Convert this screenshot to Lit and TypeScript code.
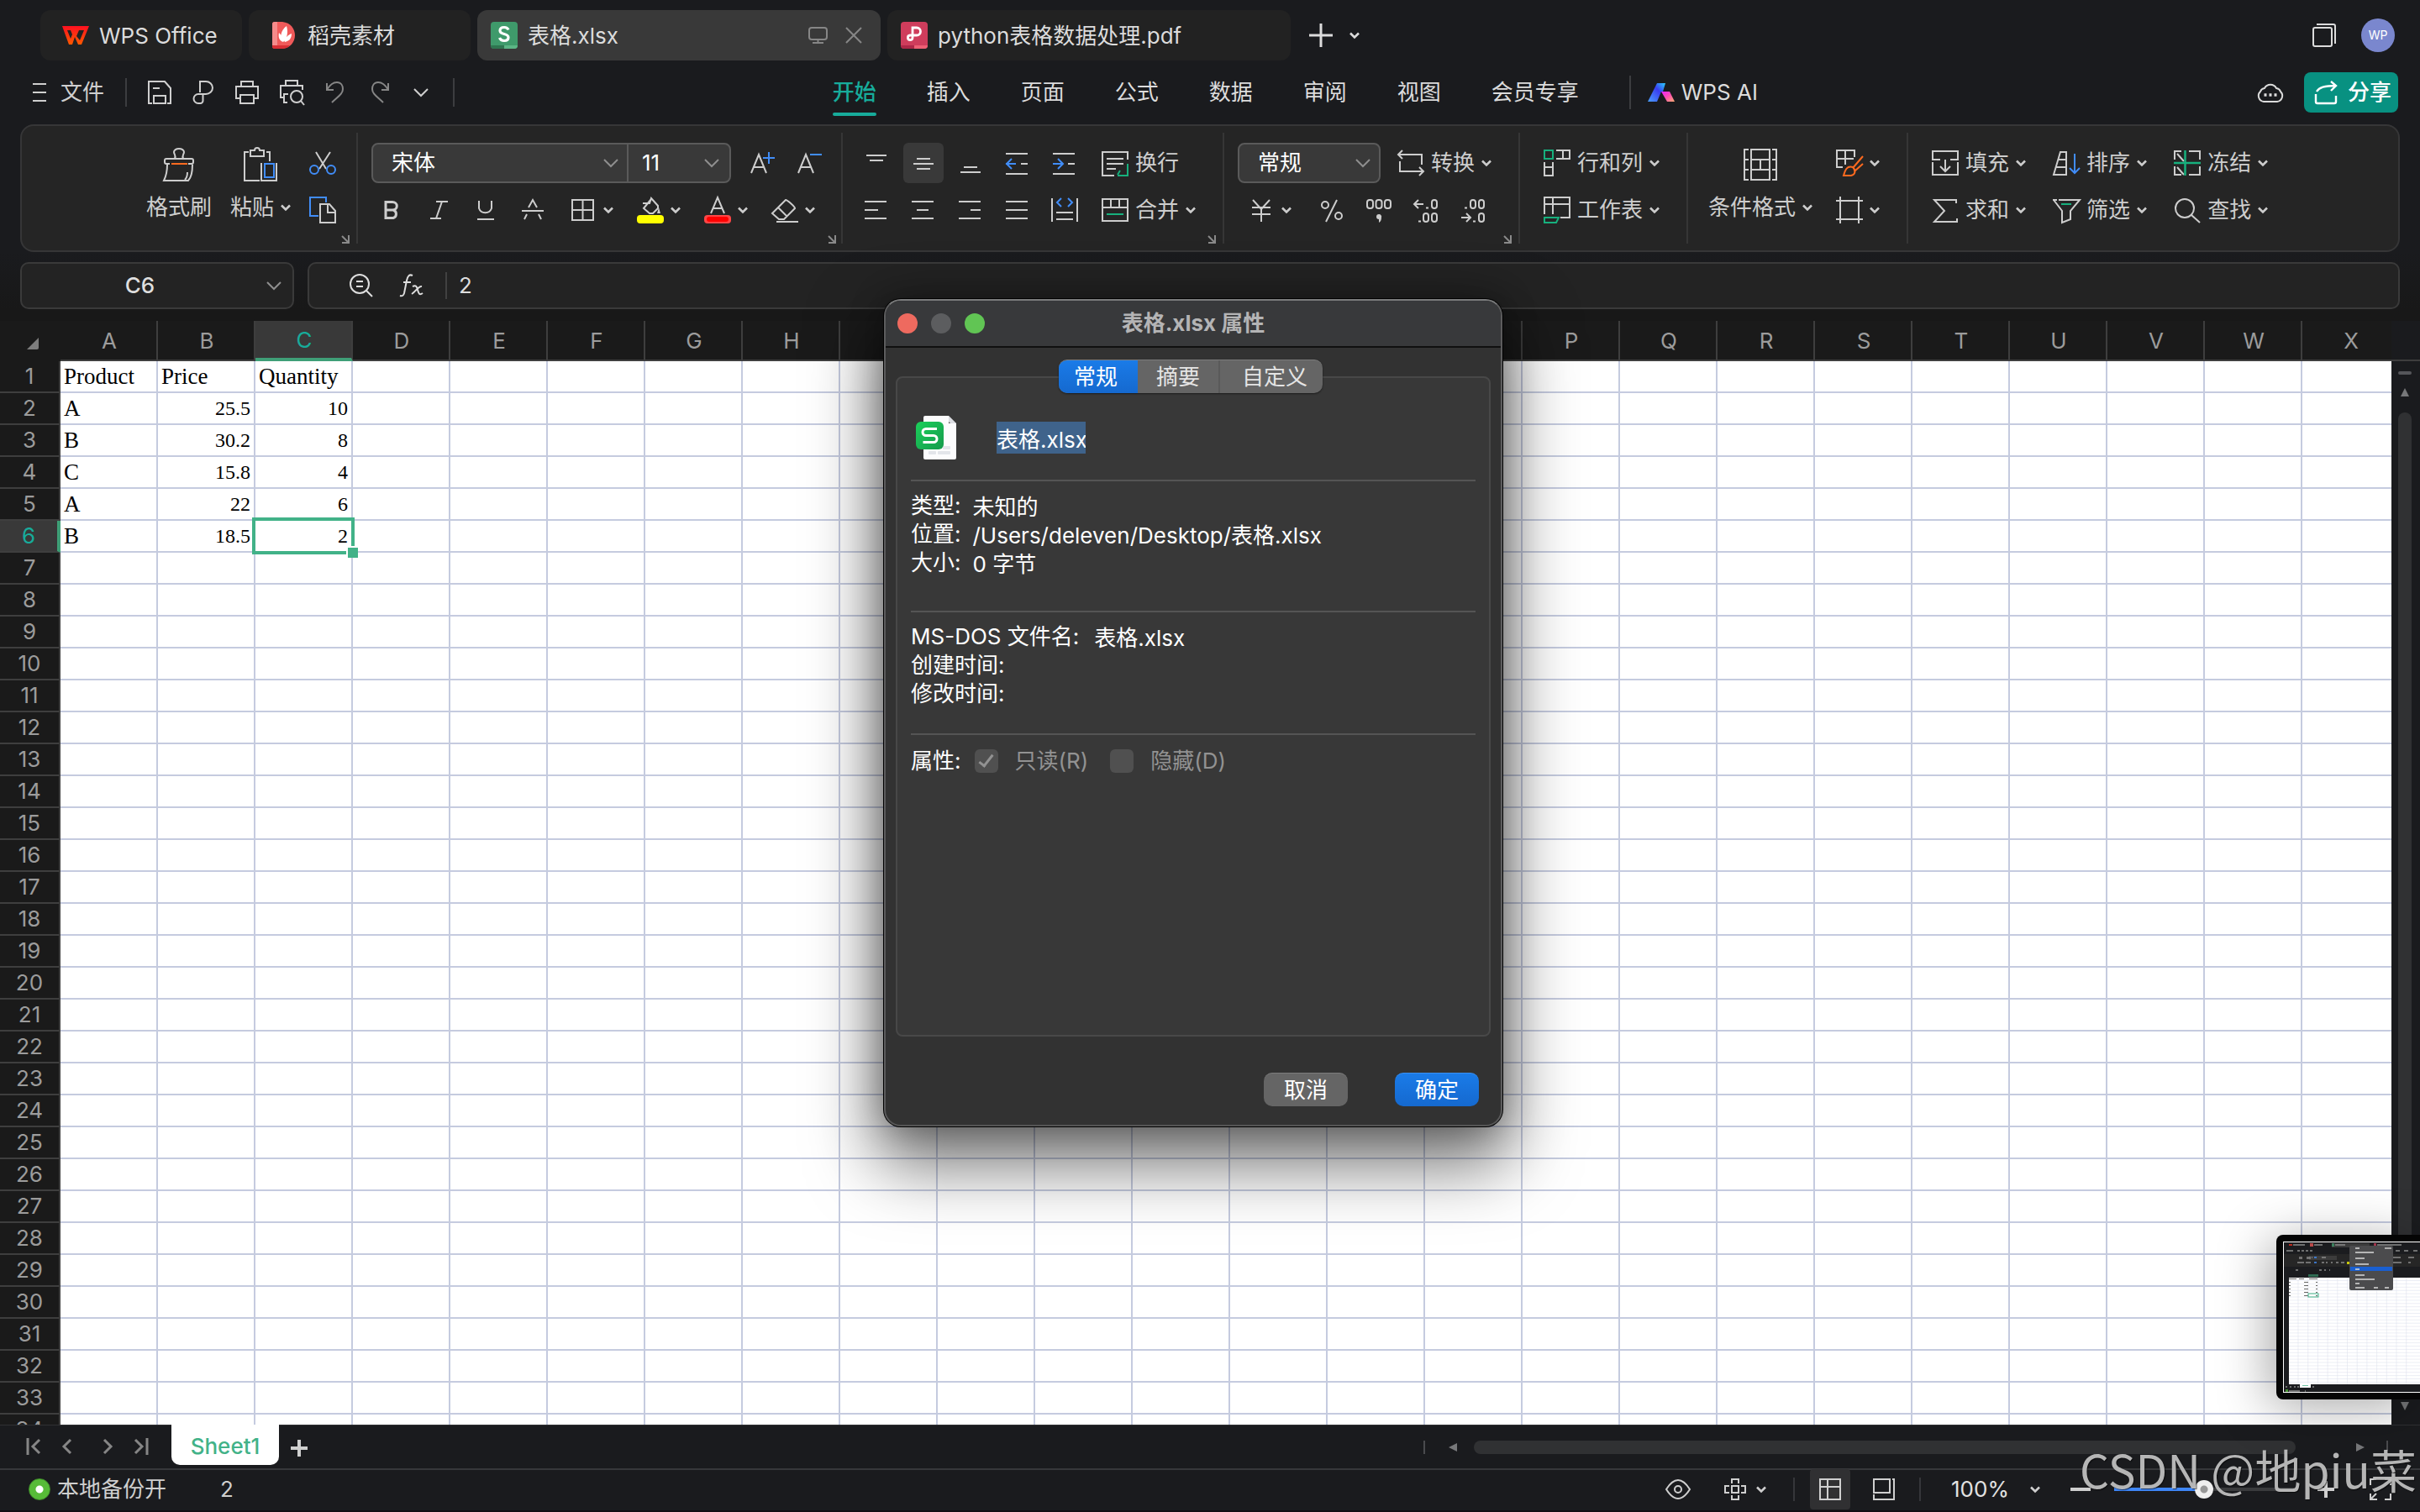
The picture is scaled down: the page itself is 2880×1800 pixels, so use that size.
import { LitElement, html, svg, css, nothing, TemplateResult } from "lit";
import { customElement, property, state } from "lit/decorators.js";
import { classMap } from "lit/directives/class-map.js";

type Glyph = { w: number; h: number; body: TemplateResult };

const BLUE = "#418df8";
const GREEN = "#17b07d";
const ORANGE = "#ff6a1f";

const g = (w: number, h: number, body: TemplateResult): Glyph => ({ w, h, body });

const icons: Record<string, Glyph> = {
  wps: g(32, 22, svg`<defs><linearGradient id="w" x1="0" y1="0" x2="0" y2="1"><stop offset="0" stop-color="#ff1020"/><stop offset="1" stop-color="#ff5a00"/></linearGradient></defs>
    <path fill="url(#w)" stroke="none" d="M0 0h16l-4 10-2-5H6l4 10 6-15h16l-9 22h-4l-4-9-3 9H8zM20 5l-3 7 4 5 5-12z"/>`),
  docer: g(28, 32, svg`<path fill="#f05a5a" stroke="none" d="M3 0h9c20 2 20 30 0 32H3a3 3 0 0 1-3-3V3a3 3 0 0 1 3-3z"/>
    <path fill="#f58b8b" stroke="none" d="M3 0h3v28H0V3a3 3 0 0 1 3-3z"/>
    <path fill="#d92f35" stroke="none" d="M0 28h21c-3 3-6 4-9 4H3a3 3 0 0 1-3-3z"/>
    <path fill="#fff" stroke="none" d="M14 24C8 19 10 10 17 5c2 7 1 13-3 19zM13 24c-5-2-6-6-5-11 3 3 5 6 5 11zM15 24c0-5 3-8 8-10 0 6-3 9-8 10z"/>`),
  xls: g(32, 32, svg`<rect width="32" height="32" rx="4" fill="#3f9a6b" stroke="none"/><path fill="#2f7650" stroke="none" d="M0 28h16v4H4a4 4 0 0 1-4-4z"/><path fill="#5cb585" stroke="none" d="M16 28h16a4 4 0 0 1-4 4H16z"/>
    <path d="M21 9.500c-1-2.500-3-3-5-3-3 0-5 1.500-5 4 0 5.500 10 2.500 10 8 0 2.500-2 4-5 4-2.500 0-4.500-1-5.500-3.500" stroke="#fff" stroke-width="3.200"/>`),
  pdf: g(32, 32, svg`<rect width="32" height="32" rx="4" fill="#cf3d5c" stroke="none"/><path fill="#ad2848" stroke="none" d="M0 28h16v4H4a4 4 0 0 1-4-4z"/><path fill="#ee5f74" stroke="none" d="M16 28h16a4 4 0 0 1-4 4H16z"/>
    <path d="M14 15V7h5a4.500 4.500 0 0 1 0 9h-8a2.800 2.800 0 1 0 3 3v-3" stroke="#fff" stroke-width="2.800"/>`),
  monitor: g(26, 22, svg`<rect x="3" y="2" width="21" height="14" rx="3"/><path d="M13.500 16v4M7 20h13"/>`),
  close: g(20, 20, svg`<path d="M1 1l18 18M19 1L1 19"/>`),
  plus: g(28, 28, svg`<path stroke-width="3" d="M14 0v28M0 14h28"/>`),
  chev: g(12, 8, svg`<path stroke-width="2.600" d="M1 1.500l5 5 5-5"/>`),
  caret: g(18, 10, svg`<path d="M1 1l8 8 8-8"/>`),
  windows: g(28, 28, svg`<rect x="1" y="5" width="22" height="22" rx="2"/><path d="M5 1h20a2 2 0 0 1 2 2v21"/>`),
  menu: g(18, 24, svg`<path d="M1 2h16M1 12h16M1 22h16"/>`),
  save: g(28, 28, svg`<path d="M5 27H1V1h19l7 8v18h-4M7 27v-9h14v9zM6 9h8"/>`),
  pshare: g(26, 28, svg`<path d="M9 14V1h7a8 7.500 0 0 1 0 15H7a5.500 5.500 0 0 0 0 11h2.500a3 3 0 0 0 3-3v-8"/>`),
  print: g(28, 28, svg`<path d="M7 7V1h14v6M5 21H1V7h26v14h-4M6 17h16v10H6z"/>`),
  preview: g(30, 30, svg`<path d="M7 7V1h14v6M5 21H1V7h26v5M9 27H5V17h5"/><circle cx="20" cy="20" r="7"/><path d="M25 25l4 5"/>`),
  undo: g(22, 26, svg`<path d="M1 2v8h8M1 10C5 3 9 1 13 1c5 0 7 4 7 8 0 6-6 9-13 16"/>`),
  redo: g(22, 26, svg`<path d="M21 2v8h-8M21 10C17 3 13 1 9 1 4 1 2 5 2 9c0 6 6 9 13 16"/>`),
  ai: g(32, 22, svg`<defs><linearGradient id="a1" x1="1" y1="0" x2="0" y2="1"><stop offset="0" stop-color="#2ad0ff"/><stop offset=".4" stop-color="#3a3df0"/><stop offset="1" stop-color="#4aa0ff"/></linearGradient>
    <linearGradient id="a2" x1="0" y1="0" x2="1" y2="1"><stop offset="0" stop-color="#e820ff"/><stop offset=".5" stop-color="#ff4fb0"/><stop offset="1" stop-color="#ffb070"/></linearGradient></defs>
    <path fill="url(#a1)" stroke="none" d="M11 0h10l-3 10h-2l-5 12H0z"/><path fill="url(#a2)" stroke="none" d="M16 10h10l6 12h-9z"/>`),
  cloud: g(32, 28, svg`<path d="M8 25a7 7 0 0 1-4-12 6 6 0 0 1 5-4 8 8 0 0 1 14 0 6 6 0 0 1 5 4 7 7 0 0 1-4 12z"/><path stroke-width="3.400" d="M8.500 17h3M14.500 17h3M20.500 17h3"/>`),
  share: g(28, 28, svg`<path stroke-width="2.400" d="M2 16v9a2 2 0 0 0 2 2h20a2 2 0 0 0 2-2v-7M3 13C6 8 12 6 26 6M20 1l6 5-6 6"/>`),
  brush: g(40, 40, svg`<path d="M15 13c2-4-1-5-1-8a6 4 0 0 1 12 0c0 3-3 4-1 8M9 19H5a2 2 0 0 1-2-2v-2a2 2 0 0 1 2-2h30a2 2 0 0 1 2 2v2a2 2 0 0 1-2 2h-4M6 20c0 8-1 13-4 19h29c3-3 5-10 5-19M27 38c2-2 3-6 3-9"/><path stroke="${ORANGE}" d="M11 19h19"/>`),
  paste: g(40, 40, svg`<path d="M6 5H1v34h18M27 5h4v11M8 3h5a3 3 0 0 1 6 0h5v7H8zM39 18v21H21V18"/><rect x="25" y="19" width="11" height="16" stroke="${BLUE}"/>`),
  cut: g(32, 28, svg`<path d="M8 1l12 20M25 1L12 21"/><g stroke="${BLUE}"><circle cx="6" cy="22" r="5"/><circle cx="26" cy="22" r="5"/></g>`),
  copy: g(32, 32, svg`<path stroke="${BLUE}" d="M11 23H1V1h19v6"/><path d="M13 9h11l7 8v14H13zM22 9v10h9"/>`),
  corner: g(10, 10, svg`<path d="M1 1l8 8M9 0v9H1"/>`),
  bold: g(32, 32, svg`<path stroke-width="3" d="M9 6.500h8a5 4.500 0 0 1 0 9.500H9zM9 16h9a5 5 0 0 1 0 9.500H9z"/>`),
  italic: g(32, 32, svg`<path d="M13 6h14M6 26h13M20 6l-7 20"/>`),
  under: g(32, 32, svg`<path d="M8 5v9a8 8 0 0 0 15 0V5M6 27h20"/>`),
  strike: g(32, 32, svg`<path d="M3 17h26M11 13l5-9 5 9M9 21l-3 6M23 21l3 6"/>`),
  borders: g(32, 32, svg`<path d="M3 4h25v24H3zM3 16h25M15.500 4v24"/>`),
  fill: g(32, 32, svg`<path d="M7 8h8l2-6 8 9v3l-6 6h-4l-7-6 9-11"/><path fill="currentColor" stroke="none" d="M26 13l2 7h-4z"/><rect y="22" width="32" height="10" rx="4" fill="#ff0" stroke="none"/>`),
  fcolor: g(32, 32, svg`<path d="M8 20L16 1l8 19M11 14h10"/><rect y="22" width="32" height="10" rx="4" fill="#ff4646" stroke="none"/><rect x="3" y="24" width="26" height="6" rx="3" fill="#f00" stroke="none"/>`),
  eraser: g(32, 32, svg`<path d="M3 18L17 4c2 0 11 8 11 10L15 27H9L1 20zM8 13l11 11"/><path d="M6 30h26"/>`),
  aplus: g(32, 32, svg`<path d="M3 28L12 6l9 22M6 21h12"/><path stroke="${BLUE}" d="M24 3v14M17 10h14"/>`),
  aminus: g(32, 32, svg`<path d="M3 28L12 6l9 22M6 21h12"/><path stroke="${BLUE}" d="M17 6h14"/>`),
  atop: g(32, 32, svg`<path d="M4 7h24M8 13h16"/>`),
  amid: g(32, 32, svg`<path d="M8 11h16M4 17h24M8 23h16"/>`),
  abot: g(32, 32, svg`<path d="M8 21h16M4 27h24"/>`),
  outdent: g(32, 32, svg`<path d="M2 5h26M20 17h8M2 29h26"/><path stroke="${BLUE}" d="M2 17h12M9 11l-6 6 6 6"/>`),
  indent: g(32, 32, svg`<path d="M2 5h26M20 17h8M2 29h26"/><path stroke="${BLUE}" d="M2 17h12M8 11l6 6-6 6"/>`),
  aleft: g(32, 32, svg`<path d="M2 6h26M2 16h16M2 26h26"/>`),
  acenter: g(32, 32, svg`<path d="M2 6h26M8 16h14M2 26h26"/>`),
  aright: g(32, 32, svg`<path d="M2 6h26M16 16h12M2 26h26"/>`),
  ajust: g(32, 32, svg`<path d="M2 6h26M2 16h26M2 26h26"/>`),
  adist: g(32, 32, svg`<path d="M1 2v28M31 2v28M6 19h20M6 27h20"/><path stroke="${BLUE}" d="M12 2L7 7l5 5M20 2l5 5-5 5"/>`),
  wrap: g(32, 32, svg`<path d="M31 12V3H1v28h14M6 11h20M6 17h20M6 23h11"/><path stroke="${GREEN}" d="M31 17v14H19M22 25l-3 5"/>`),
  merge: g(32, 32, svg`<path d="M1 3h30v26H1zM1 13h30M11 3v10M21 3v10"/><path stroke="${GREEN}" d="M6 21h20"/>`),
  convert: g(32, 32, svg`<path d="M6 1L1 6l5 5M1 6h28v12M26 31l5-5-5-5M31 26H3V14"/>`),
  yen: g(32, 32, svg`<path d="M6 4l10 11L26 4M16 15v15M5 13h22M5 21h22"/>`),
  percent: g(32, 32, svg`<circle cx="8" cy="10" r="4"/><circle cx="24" cy="23" r="4"/><path d="M22 4L9 30"/>`),
  thousand: g(32, 32, svg`<rect x="2" y="4" width="7" height="10" rx="3"/><rect x="12.500" y="4" width="7" height="10" rx="3"/><rect x="23" y="4" width="7" height="10" rx="3"/><path fill="currentColor" stroke="none" d="M16 21a3 3 0 0 1 3 4c0 3-1 5-3 6v-4a3 3 0 0 1 0-6z"/>`),
  decinc: g(32, 32, svg`<path d="M2 9h11M7 4L2 9l5 5M16 13.500h3M7 29.500h3"/><rect x="23" y="4" width="6" height="10" rx="3"/><rect x="13" y="20" width="6" height="10" rx="3"/><rect x="23" y="20" width="6" height="10" rx="3"/>`),
  decdec: g(32, 32, svg`<path d="M2 25h11M8 20l5 5-5 5M16 29.500h3M6 13.500h3"/><rect x="23" y="20" width="6" height="10" rx="3"/><rect x="13" y="4" width="6" height="10" rx="3"/><rect x="23" y="4" width="6" height="10" rx="3"/>`),
  rowcol: g(32, 32, svg`<path d="M15 1h16v10H15M23 1v10M1 15v16h10V15M1 21h10"/><rect x="1" y="1" width="10" height="10" stroke="${GREEN}"/>`),
  sheet: g(32, 32, svg`<path d="M1 21V1h30v24H20M1 9h30M11 1v20"/><path stroke="${GREEN}" d="M1 25h17l-3 6H1z"/>`),
  cond: g(40, 40, svg`<path d="M6 2H1v36h5M34 2h5v36h-5M1 14h5M1 26h5M34 14h5M34 26h5M9 2h22v12H9zM9 26h22v12H9zM20 14v12M9 14v12M31 14v12"/>`),
  tstyle: g(32, 32, svg`<path d="M8 21H1V1h21v8M1 11h20M11 1v17"/><path stroke="${ORANGE}" d="M32 8L20 22M32 17l-9 8M20 21c-7-2-9 3-11 10h9c5-1 6-6 2-10z"/>`),
  cells: g(32, 32, svg`<path d="M5 0v32M27 0v32M0 5h32M0 27h32"/>`),
  pad: g(32, 32, svg`<path d="M10 12H1V2h30v10h-9M1 15v15h30V15M16 12v14M10 20l6 6 6-6"/>`),
  sort: g(32, 32, svg`<path d="M9 3h7v27H1zM7 12h9M4 21h12"/><path stroke="${BLUE}" d="M26 5v23M20 22l6 6 6-6"/>`),
  freeze: g(32, 32, svg`<path d="M9 2H1v10M1 20v10h8M18 2h13v10M18 30h13V20M4 5l8 9M4 21l8 9"/><path stroke="${GREEN}" stroke-width="2.500" d="M13.500 1v30M0 16h32"/>`),
  sum: g(32, 32, svg`<path d="M29 8V4H3l12 13L3 30h27v-4"/>`),
  filter: g(32, 32, svg`<path d="M0 4h5M7 4h25L21 17v10l-10 4V17L1 4"/><path stroke="${GREEN}" d="M10 9h12"/>`),
  find: g(32, 32, svg`<circle cx="13" cy="14" r="11"/><path d="M21 22l10 9"/>`),
  lookup: g(28, 28, svg`<circle cx="12" cy="12" r="11"/><path d="M20 20l7 7M8 9h8M8 15h8"/>`),
  fx: g(28, 28, svg`<path d="M15 2c-4-2-6 1-7 6L5 23c-1 3-2 4-5 3M4 10h9M15 15c4-2 5 0 6 4s2 7 6 4M26 15c-4-1-7 6-12 9"/>`),
  first: g(18, 20, svg`<path stroke-width="3" d="M2 0v20M16 2l-8 8 8 8"/>`),
  prev: g(12, 20, svg`<path stroke-width="3" d="M10 2l-8 8 8 8"/>`),
  next: g(12, 20, svg`<path stroke-width="3" d="M2 2l8 8-8 8"/>`),
  last: g(18, 20, svg`<path stroke-width="3" d="M16 0v20M2 2l8 8-8 8"/>`),
  add: g(20, 20, svg`<path stroke-width="4" d="M10 0v20M0 10h20"/>`),
  eye: g(30, 24, svg`<path d="M1 12C6 4 10 1 15 1s9 3 14 11c-5 8-9 11-14 11S6 20 1 12z"/><circle cx="15" cy="12" r="4"/>`),
  cross: g(26, 26, svg`<path d="M9 6V1h8v5M9 20v5h8v-5M6 9H1v8h5M20 9h5v8h-5"/><rect x="9" y="9" width="8" height="8"/>`),
  gridv: g(26, 26, svg`<path d="M1 1h24v24H1zM1 10h24M10 1v24"/>`),
  page: g(26, 26, svg`<path d="M1 1h19v16H1zM1 19v6h24V1h-2"/>`),
  minus: g(24, 4, svg`<path stroke-width="4" d="M0 2h24"/>`),
  full: g(26, 26, svg`<path d="M1 8V1h7M18 1h7v7M25 18v7h-7M9 25H1v-7M1 25l7-7"/>`),
};

const icon = (name: string) => {
  const i = icons[name];
  return html`<svg class="ic" aria-hidden="true" width=${i.w} height=${i.h} viewBox="0 0 ${i.w} ${i.h}"
    fill="none" stroke="currentColor" stroke-width="2">${i.body}</svg>`;
};

const base = css`
  *, *::before, *::after { box-sizing: border-box; }
  button, select, input { font: inherit; color: inherit; background: none; border: 0; margin: 0; padding: 0; }
  button { white-space: nowrap; }
  input { outline: none; min-width: 0; }
  select { appearance: none; outline: none; }
  .ic { display: block; flex: none; overflow: visible; }
  .picker { display: grid; align-items: center; }
  .picker > * { grid-area: 1 / 1; }
  .picker > .ic { justify-self: end; pointer-events: none; }
`;

@customElement("title-tabs")
export class TitleTabs extends LitElement {
  static styles = [base, css`
    :host { display: flex; align-items: center; gap: 8px; padding: 12px 30px 8px 48px; color: #dcdcdc; }
    .tab { display: flex; align-items: center; gap: 12px; height: 60px; padding: 2px 16px 0; border-radius: 12px; background: #222; }
    .tab .ic { margin-top: -2px; }
    .home { width: 240px; padding: 2px 26px 0; }
    .store { width: 264px; padding: 2px 28px 0; gap: 14px; }
    .doc { width: 480px; padding-right: 22px; }
    .on { background: #393939; }
    .label { flex: 1; text-align: left; }
    .dim { color: #868686; margin-left: 10px; }
    .dim + .dim { margin-left: 8px; }
    .new { margin-left: 14px; }
    .more { margin-left: 12px; }
    .restore { margin-left: auto; }
    .avatar { display: grid; place-items: center; width: 40px; height: 40px; border-radius: 50%; margin-left: 22px;
      background: #7a87ce; color: #fff; font-size: 14px; }
  `];
  render() {
    return html`
      <button class="tab home">${icon("wps")}<span class="label">WPS Office</span></button>
      <button class="tab store">${icon("docer")}<span class="label">稻壳素材</span></button>
      <button class="tab doc on">${icon("xls")}<span class="label">表格.xlsx</span><span class="dim">${icon("monitor")}</span><span class="dim">${icon("close")}</span></button>
      <button class="tab doc">${icon("pdf")}<span class="label">python表格数据处理.pdf</span></button>
      <button class="new" aria-label="新建">${icon("plus")}</button>
      <button class="more" aria-label="更多">${icon("chev")}</button>
      <button class="restore" aria-label="窗口">${icon("windows")}</button>
      <button class="avatar">WP</button>`;
  }
}

@customElement("menu-bar")
export class MenuBar extends LitElement {
  @state() private active = 0;
  static styles = [base, css`
    :host { display: flex; align-items: center; height: 60px; padding: 0 26px 0 24px; color: #dcdcdc; }
    .left { flex: 5 1 0; display: flex; align-items: center; gap: 25px; padding-left: 14px; color: #cfcfcf; }
    .file { display: flex; align-items: center; gap: 16px; }
    .bar { flex: none; width: 2px; height: 34px; background: #3c3d40; }
    .grey { color: #868686; }
    .grey + .grey { margin-left: 6px; }
    .drop { margin: 0 4px; }
    .menus { display: flex; align-items: center; gap: 60px; }
    .menu { position: relative; height: 60px; }
    .menu.on { color: #17ac9b; font-weight: 500; }
    .menu.on::after { content: ""; position: absolute; left: 0; right: 0; bottom: 2px; height: 4px; border-radius: 2px; background: #17ac9b; }
    .ai { display: flex; align-items: center; gap: 8px; border-left: 2px solid #3c3d40; height: 40px; padding-left: 20px; }
    .right { flex: 4 1 0; display: flex; align-items: center; justify-content: flex-end; gap: 24px; }
    .share { display: flex; align-items: center; gap: 12px; width: 112px; height: 48px; padding-left: 12px; border-radius: 8px;
      background: #089181; color: #fff; font-weight: 500; }
  `];
  render() {
    const menus = ["开始", "插入", "页面", "公式", "数据", "审阅", "视图", "会员专享"];
    return html`
      <div class="left">
        <button class="file">${icon("menu")}文件</button>
        <span class="bar"></span>
        <button aria-label="保存">${icon("save")}</button>
        <button aria-label="输出">${icon("pshare")}</button>
        <button aria-label="打印">${icon("print")}</button>
        <button aria-label="打印预览">${icon("preview")}</button>
        <button class="grey" aria-label="撤销">${icon("undo")}</button>
        <button class="grey" aria-label="恢复">${icon("redo")}</button>
        <button class="drop" aria-label="更多">${icon("caret")}</button>
        <span class="bar"></span>
      </div>
      <nav class="menus">
        ${menus.map((m, i) => html`<button class=${classMap({ menu: true, on: i === this.active })} @click=${() => (this.active = i)}>${m}</button>`)}
        <button class="ai">${icon("ai")}WPS AI</button>
      </nav>
      <div class="right">
        <button aria-label="云">${icon("cloud")}</button>
        <button class="share">${icon("share")}分享</button>
      </div>`;
  }
}

const tool = (name: string, label: string, on = false) =>
  html`<button class=${classMap({ tool: true, on })} aria-label=${label}>${icon(name)}</button>`;
const drop = (name: string, text: string, arrow = true, label = text) =>
  html`<button class="drop" aria-label=${label}>${icon(name)}${text ? html`<span>${text}</span>` : nothing}${arrow ? icon("chev") : nothing}</button>`;
const big = (name: string, text: string, arrow = true) =>
  html`<button class="big">${icon(name)}<span class="cap">${text}${arrow ? icon("chev") : nothing}</span></button>`;

@customElement("tool-ribbon")
export class ToolRibbon extends LitElement {
  static styles = [base, css`
    :host { display: flex; margin: 8px 24px 0; padding: 8px 0; border: 2px solid #363637; border-radius: 16px; background: #252525; color: #cdcdcd; overflow: hidden; }
    .group { display: flex; flex-direction: column; flex: none; height: 132px; padding: 12px 24px 0 16px; border-right: 2px solid #363636; }
    .group:last-child { border: 0; }
    .clip { padding: 12px 16px 0 140px; }
    .font { padding-right: 14px; }
    .row { display: flex; align-items: center; gap: 8px; height: 48px; }
    .row + .row { margin-top: 8px; }
    .wide { gap: 12px; }
    .cols { display: flex; gap: 8px; height: 104px; }
    .tight { gap: 6px; }
    .tool { display: grid; place-items: center; width: 48px; height: 48px; border-radius: 6px; }
    .tool.on { background: #393939; }
    .drop { display: flex; align-items: center; gap: 8px; height: 48px; padding: 0 8px 0 12px; }
    .big { display: flex; flex-direction: column; align-items: center; gap: 16px; padding: 6px 8px 0; height: 104px; }
    .cap { display: flex; align-items: center; gap: 8px; line-height: 30px; }
    .corner { display: flex; align-items: flex-end; align-self: flex-end; height: 16px; color: #8a8a8a; margin-right: -16px; }
    .clip .corner, .font .corner { margin-right: -8px; }
    .combo { display: flex; height: 48px; border: 2px solid #5a5a5a; border-radius: 8px; background: #393939; color: #fff; }
    .combo .ic { color: #8e8e8e; margin-right: 10px; }
    .combo select { width: 100%; height: 44px; padding-left: 22px; }
    .family { width: 302px; }
    .size { width: 122px; border-left: 2px solid #5a5a5a; }
    .size select { padding-left: 16px; }
    .size .ic { margin-right: 12px; }
    .number { width: 170px; }
    .number .picker { width: 100%; }
    .steps { margin-left: 5px; }
    .apart { margin-left: 8px; }
  `];
  render() {
    return html`
      <div class="group clip">
        <div class="cols tight">
          ${big("brush", "格式刷", false)}${big("paste", "粘贴")}
          <div><div class="row">${tool("cut", "剪切")}</div><div class="row">${tool("copy", "复制")}</div></div>
        </div>
        <button class="corner" aria-label="剪贴板设置">${icon("corner")}</button>
      </div>
      <div class="group font">
        <div class="row">
          <div class="combo">
            <label class="picker family"><select aria-label="字体"><option>宋体</option></select>${icon("caret")}</label>
            <label class="picker size"><select aria-label="字号"><option>11</option></select>${icon("caret")}</label>
          </div>
          <div class="row steps">${tool("aplus", "增大字号")}${tool("aminus", "减小字号")}</div>
        </div>
        <div class="row">
          ${tool("bold", "加粗")}${tool("italic", "倾斜")}${tool("under", "下划线")}${tool("strike", "删除线")}
          ${drop("borders", "", true, "边框")}${drop("fill", "", true, "填充颜色")}${drop("fcolor", "", true, "字体颜色")}${drop("eraser", "", true, "清除")}
        </div>
        <button class="corner" aria-label="字体设置">${icon("corner")}</button>
      </div>
      <div class="group">
        <div class="row">${tool("atop", "顶端对齐")}${tool("amid", "垂直居中", true)}${tool("abot", "底端对齐")}${tool("outdent", "减少缩进")}${tool("indent", "增加缩进")}${drop("wrap", "换行", false)}</div>
        <div class="row">${tool("aleft", "左对齐")}${tool("acenter", "居中")}${tool("aright", "右对齐")}${tool("ajust", "两端对齐")}${tool("adist", "分散对齐")}${drop("merge", "合并")}</div>
        <button class="corner" aria-label="对齐设置">${icon("corner")}</button>
      </div>
      <div class="group">
        <div class="row">
          <div class="combo number"><label class="picker"><select aria-label="数字格式"><option>常规</option></select>${icon("caret")}</label></div>
          ${drop("convert", "转换")}
        </div>
        <div class="row">${drop("yen", "", true, "货币")}<div class="row apart">${tool("percent", "百分比")}${tool("thousand", "千位分隔")}${tool("decinc", "增加小数位")}${tool("decdec", "减少小数位")}</div></div>
        <button class="corner" aria-label="数字设置">${icon("corner")}</button>
      </div>
      <div class="group">
        <div class="row">${drop("rowcol", "行和列")}</div>
        <div class="row">${drop("sheet", "工作表")}</div>
      </div>
      <div class="group">
        <div class="cols">
          ${big("cond", "条件格式")}
          <div><div class="row">${drop("tstyle", "", true, "表格样式")}</div><div class="row">${drop("cells", "", true, "单元格样式")}</div></div>
        </div>
      </div>
      <div class="group">
        <div class="row wide">${drop("pad", "填充")}${drop("sort", "排序")}${drop("freeze", "冻结")}</div>
        <div class="row wide">${drop("sum", "求和")}${drop("filter", "筛选")}${drop("find", "查找")}</div>
      </div>`;
  }
}

@customElement("formula-bar")
export class FormulaBar extends LitElement {
  static styles = [base, css`
    :host { display: flex; gap: 16px; padding: 12px 24px 14px; color: #dedede; }
    .box { display: flex; align-items: center; height: 56px; border: 2px solid #3a3a3a; border-radius: 10px; background: #232323; }
    .name { width: 326px; padding-right: 13px; }
    .name input { flex: 1; text-align: center; font-weight: 500; padding-right: 10px; }
    .name button { color: #8e8e8e; }
    .formula { flex: 1; padding-left: 48px; gap: 32px; }
    .formula input { flex: 1; height: 32px; border-left: 2px solid #414141; padding-left: 14px; margin-left: -6px; }
  `];
  render() {
    return html`
      <div class="box name"><input aria-label="名称框" .value=${"C6"} /><button aria-label="选择名称">${icon("caret")}</button></div>
      <div class="box formula"><button aria-label="查看">${icon("lookup")}</button><button aria-label="插入函数">${icon("fx")}</button>
        <input aria-label="编辑栏" .value=${"2"} /></div>`;
  }
}

@customElement("cell-grid")
export class CellGrid extends LitElement {
  @property({ attribute: false }) rows: (string | number)[][] = [];
  @property({ type: Number }) count = 34;
  @property({ type: Number }) selRow = 5;
  @property({ type: Number }) selCol = 2;
  static styles = [base, css`
    :host { display: flex; min-height: 0; overflow: hidden; background: #1a1b1e; }
    .view { flex: 1; min-width: 0; overflow: hidden; background: #fff; }
    table { table-layout: fixed; width: 2856px; border-collapse: separate; border-spacing: 0; }
    .rc { width: 72px; }
    .cc { width: 116px; }
    th { background: #1a1a1a; color: #9c9c9c; font-weight: 400; padding: 0; text-align: center; }
    thead th { height: 48px; padding: 2px 0 0 2px; border-right: 2px solid #3e3e3e; border-bottom: 2px solid #3e3e3e; }
    .all { border: 0; text-align: right; }
    .all svg { display: inline-block; vertical-align: middle; margin-right: 26px; }
    tbody th { height: 38px; border-right: 2px solid #3e3e3e; border-bottom: 2px solid #3e3e3e; line-height: 36px; }
    th.on { background: #393939; color: #17ac9b; }
    thead th.on { border-bottom: 4px solid #3f9f77; }
    tbody th.on { border-right: 4px solid #3f9f77; }
    td { position: relative; height: 38px; padding: 0 4px; line-height: 36px; border-right: 2px solid #c5cbdf; border-bottom: 2px solid #c5cbdf; color: #000;
      font-family: "Liberation Serif", "Noto Sans CJK SC", serif; font-size: 27px; white-space: nowrap; }
    td.num { text-align: right; font-size: 24px; }
    .sel { position: absolute; z-index: 1; inset: -4px; border: 4px solid #42b288; pointer-events: none; }
    .sel::after { content: ""; position: absolute; right: -8px; bottom: -8px; width: 12px; height: 12px; background: #42b288; box-shadow: -2px -2px 0 #fff; }
    .scroll { flex: none; width: 34px; display: flex; flex-direction: column; align-items: center; padding-right: 2px; }
    .top { align-self: stretch; margin-right: -2px; height: 48px; border-bottom: 2px solid #3e3e3e; }
    .split { width: 16px; height: 4px; border-radius: 2px; background: #55565a; margin: 12px 0 16px; }
    .thumb { flex: 1; width: 16px; border-radius: 8px; background: #303133; margin: 19px 0 60px; }
    .end { margin-bottom: 17px; }
  `];
  render() {
    const cols = Array.from({ length: 24 }, (_, i) => String.fromCharCode(65 + i));
    return html`
      <div class="view"><table>
        <colgroup><col class="rc" />${cols.map(() => html`<col class="cc" />`)}</colgroup>
        <thead><tr><th class="all"><svg width="14" height="14" viewBox="0 0 14 14"><path fill="#7d7d7d" d="M14 0v12a2 2 0 0 1-2 2H0z"/></svg></th>
          ${cols.map((c, i) => html`<th scope="col" class=${classMap({ on: i === this.selCol })}>${c}</th>`)}</tr></thead>
        <tbody>${Array.from({ length: this.count }, (_, r) => html`<tr>
          <th scope="row" class=${classMap({ on: r === this.selRow })}>${r + 1}</th>
          ${cols.map((_c, c) => {
            const v = this.rows[r]?.[c];
            return html`<td class=${classMap({ num: typeof v === "number" })}>${v ?? nothing}${r === this.selRow && c === this.selCol ? html`<div class="sel"></div>` : nothing}</td>`;
          })}</tr>`)}</tbody>
      </table></div>
      <div class="scroll">
        <div class="top"></div><div class="split"></div>
        <svg class="ic" width="10" height="10" viewBox="0 0 10 10"><path fill="#77787a" d="M5 0l5 10H0z"/></svg>
        <div class="thumb"></div>
        <svg class="ic end" width="10" height="10" viewBox="0 0 10 10"><path fill="#77787a" d="M5 10L0 0h10z"/></svg>
      </div>`;
  }
}

@customElement("sheet-bar")
export class SheetBar extends LitElement {
  static styles = [base, css`
    :host { display: flex; height: 54px; border-top: 1px solid #303134; border-bottom: 2px solid #37383b; background: #1a1b1e; }
    .left { flex: 35 1 0; display: flex; padding-left: 20px; margin-top: -1px; }
    .nav { display: grid; place-items: center; width: 40px; height: 52px; color: #868686; }
    .nav:nth-child(3) { margin-left: 8px; }
    .tab { width: 128px; height: 48px; margin-left: 16px; padding-top: 4px; border-radius: 0 0 10px 10px; background: #fff; color: #42b288; font-weight: 500; }
    .add { display: grid; place-items: center; width: 48px; height: 56px; color: #cfcfcf; }
    .right { flex: 24 1 0; display: flex; align-items: center; padding-right: 38px; }
    .mark { width: 2px; height: 16px; background: #4a4b4e; }
    .back { margin: 0 20px 0 28px; }
    .track { flex: 1; height: 16px; }
    .thumb { width: 94%; height: 16px; border-radius: 8px; background: #303133; }
    .fore { margin: 0 26px 0 10px; }
  `];
  render() {
    return html`
      <div class="left">
        <button class="nav" aria-label="第一张">${icon("first")}</button><button class="nav" aria-label="上一张">${icon("prev")}</button>
        <button class="nav" aria-label="下一张">${icon("next")}</button><button class="nav" aria-label="最后一张">${icon("last")}</button>
        <button class="tab">Sheet1</button>
        <button class="add" aria-label="新建工作表">${icon("add")}</button>
      </div>
      <div class="right">
        <span class="mark"></span>
        <svg class="ic back" width="10" height="10" viewBox="0 0 10 10"><path fill="#77787a" d="M0 5l10-5v10z"/></svg>
        <div class="track"><div class="thumb"></div></div>
        <svg class="ic fore" width="10" height="10" viewBox="0 0 10 10"><path fill="#77787a" d="M10 5L0 0v10z"/></svg>
        <span class="mark"></span>
      </div>`;
  }
}

@customElement("status-bar")
export class StatusBar extends LitElement {
  static styles = [base, css`
    :host { display: flex; align-items: center; height: 50px; padding: 0 34px 2px; border-bottom: 2px solid #120d12; background: #1a1b1e; color: #cfcfcf; }
    .backup { display: flex; align-items: center; gap: 8px; }
    .dot { width: 26px; height: 26px; border-radius: 50%; border: 1px solid #3f8f2a; background: radial-gradient(circle, #fff 0 4px, #57bb38 5px); }
    .result { margin-left: 64px; }
    .tools { display: flex; align-items: center; margin-left: auto; }
    .center { display: flex; align-items: center; gap: 12px; margin: 0 32px 0 40px; }
    .bar { width: 2px; height: 28px; background: #35363a; }
    .view { display: grid; place-items: center; width: 48px; height: 48px; border-radius: 4px; margin-right: 18px; }
    .view.on { background: #303032; margin: 0 16px 0 18px; }
    .zoom { width: 106px; margin: 0 36px; }
    .zoom select { width: 100%; color: #e2e2e2; }
    input[type="range"] { appearance: none; width: 214px; height: 22px; margin: 0 28px; }
    input::-webkit-slider-runnable-track { height: 4px; background: linear-gradient(90deg, #3e86f7 50%, #3a3b3d 50%); }
    input::-webkit-slider-thumb { appearance: none; width: 22px; height: 22px; margin-top: -9px; border-radius: 50%; background: radial-gradient(circle, #979797 0 4px, #efefef 5px); }
    .full { margin-left: 42px; }
  `];
  render() {
    return html`
      <button class="backup"><span class="dot"></span>本地备份开</button>
      <span class="result">2</span>
      <div class="tools">
        <button aria-label="护眼">${icon("eye")}</button>
        <button class="center" aria-label="阅读模式">${icon("cross")}${icon("chev")}</button>
        <span class="bar"></span>
        <button class="view on" aria-label="普通视图">${icon("gridv")}</button>
        <button class="view" aria-label="分页预览">${icon("page")}</button>
        <span class="bar"></span>
        <label class="picker zoom"><select aria-label="缩放"><option>100%</option></select>${icon("chev")}</label>
        <button aria-label="缩小">${icon("minus")}</button>
        <input type="range" aria-label="缩放比例" min="0" max="200" value="100" />
        <button aria-label="放大">${icon("add")}</button>
        <button class="full" aria-label="全屏">${icon("full")}</button>
      </div>`;
  }
}

@customElement("file-properties")
export class FileProperties extends LitElement {
  static styles = [base, css`
    :host { display: block; width: 736px; border: 2px solid #666769; border-color: #7a7b7c #5c5c5d #555; border-radius: 20px; background: #323232; color: #fff; line-height: 34px;
      box-shadow: 0 0 0 1px #000, 0 36px 80px 10px rgba(0, 0, 0, 0.55), 0 0 40px rgba(0, 0, 0, 0.3); padding: 0 12px 22px; }
    .title { display: grid; grid-template-columns: 1fr auto 1fr; align-items: center; height: 56px; margin: 0 -12px 14px; padding: 0 14px;
      border-bottom: 2px solid #101010; border-radius: 18px 18px 0 0; background: #38393b; }
    .lights { display: flex; gap: 16px; }
    .lights button { width: 24px; height: 24px; border-radius: 50%; }
    .shut { background: #ee6a5f; }
    .mini { background: #5c5d5f; }
    .max { background: #61c554; }
    h1 { margin: 0; font-size: 26px; font-weight: 700; color: #b4b4b5; }
    .tabs { position: relative; display: flex; width: 314px; height: 40px; margin: 0 0 0 194px; border-radius: 10px; overflow: hidden; background: #656565;
      box-shadow: 0 1px 2px #1c1c1c; border-top: 1px solid #7c7c7c; }
    .tabs button { flex: none; width: 98px; color: #e4e4e4; border-right: 2px solid #5a5a5a; }
    .tabs .wide { width: 122px; border: 0; padding-left: 8px; }
    .tabs .on { width: 94px; border: 0; padding-right: 6px; background: linear-gradient(#1a7be8, #1569cf); color: #fff; }
    .panel { min-height: 786px; margin-top: -20px; padding: 45px 16px 0; border: 2px solid #484848; border-radius: 8px; background: #383838; }
    .file { display: flex; align-items: center; gap: 48px; height: 52px; padding-left: 6px; margin-bottom: 24px; }
    .file input { width: 106px; height: 38px; background: #3f638b; }
    dl { display: grid; grid-template-columns: max-content 1fr; column-gap: 14px; grid-auto-rows: 34px; margin: 0; padding-top: 12px; border-top: 2px solid #555; }
    dt { white-space: nowrap; }
    dd { margin: 0; padding-top: 2px; }
    .info { height: 156px; }
    .times { height: 146px; column-gap: 18px; }
    .attrs { display: flex; align-items: center; padding-top: 14px; border-top: 2px solid #555; }
    .attrs label { color: #929292; margin: 0 26px 0 20px; }
    .attrs input { appearance: none; width: 28px; height: 28px; border-radius: 6px; background: #505050; }
    .attrs input:checked { display: grid; place-items: center; }
    .attrs input:checked::before { content: ""; width: 9px; height: 18px; border: solid #929292; border-width: 0 3px 3px 0; transform: rotate(38deg); margin-top: -5px; }
    .attrs .first { margin-left: 16px; }
    .buttons { display: flex; justify-content: flex-end; gap: 56px; margin-top: 43px; }
    .buttons button { width: 100px; height: 40px; border-radius: 10px; background: #656565; border-top: 1px solid #7c7c7c; line-height: 36px; }
    .buttons .ok { background: linear-gradient(#1a7be8, #1569cf); border-top-color: #3a90f0; margin-right: 14px; }
  `];
  render() {
    return html`
      <div class="title"><div class="lights"><button class="shut" aria-label="关闭"></button><button class="mini" aria-label="最小化"></button><button class="max" aria-label="最大化"></button></div>
        <h1>表格.xlsx 属性</h1></div>
      <div class="tabs"><button class="on">常规</button><button>摘要</button><button class="wide">自定义</button></div>
      <div class="panel">
        <div class="file">
          <svg class="ic" width="48" height="52" viewBox="0 0 48 52"><defs><linearGradient id="s" x1="0" y1="0" x2="1" y2="1"><stop offset="0" stop-color="#1bd05a"/><stop offset="1" stop-color="#159a4c"/></linearGradient></defs>
            <path fill="#fcfcfd" d="M11 0h28l9 9v41a2 2 0 0 1-2 2H11a2 2 0 0 1-2-2V2a2 2 0 0 1 2-2z"/><path fill="#2e2e2e" d="M39 0v9h9z"/><path fill="#dcdde2" d="M39 0l9 9h-6a3 3 0 0 1-3-3z"/>
            <g fill="#e3e5ea"><rect x="15" y="42" width="9" height="4" rx="1"/><rect x="26" y="42" width="15" height="4" rx="1"/><rect x="32" y="36" width="9" height="4" rx="1"/></g>
            <rect y="7" width="33" height="33" rx="6" fill="url(#s)"/>
            <path d="M25 15.500H12a4 4 0 0 0 0 8h9a4 4 0 0 1 0 8H8.500" fill="none" stroke="#fff" stroke-width="3"/></svg>
          <input aria-label="文件名" .value=${"表格.xlsx"} />
        </div>
        <dl class="info"><dt>类型:</dt><dd>未知的</dd><dt>位置:</dt><dd>/Users/deleven/Desktop/表格.xlsx</dd><dt>大小:</dt><dd>0 字节</dd></dl>
        <dl class="times"><dt>MS-DOS 文件名:</dt><dd>表格.xlsx</dd><dt>创建时间:</dt><dd></dd><dt>修改时间:</dt><dd></dd></dl>
        <div class="attrs">属性:
          <input class="first" id="ro" type="checkbox" checked disabled /><label for="ro">只读(R)</label>
          <input id="hid" type="checkbox" disabled /><label for="hid">隐藏(D)</label></div>
      </div>
      <div class="buttons"><button>取消</button><button class="ok">确定</button></div>`;
  }
}

@customElement("screen-preview")
export class ScreenPreview extends LitElement {
  static styles = css`
    :host { display: block; width: 171px; height: 196px; border-radius: 8px 0 0 8px; background: #050505; overflow: hidden;
      box-shadow: -8px 8px 60px rgba(0, 0, 0, 0.35); }
    svg { display: block; }
  `;
  render() {
    const v = Array.from({ length: 12 }, (_, i) => 26 + i * 11.700);
    const h = Array.from({ length: 32 }, (_, i) => 54.500 + i * 3.900);
    const bar = (x: number, y: number, w: number, c = "#8b8b8b", t = 2) => svg`<rect x=${x} y=${y} width=${w} height=${t} fill=${c} opacity=".75"/>`;
    return html`<svg width="171" height="196" viewBox="0 0 171 196">
      <rect x="8.500" y="8.500" width="170" height="179" fill="#1b1c1f" stroke="#fff"/>
      <rect x="9" y="23" width="170" height="15" fill="#262626"/>
      <rect x="39" y="25" width="33" height="5" fill="#3c3c3c"/>
      <rect x="66" y="10" width="45" height="5" fill="#3b3b3b"/>
      <rect x="15" y="51" width="164" height="127" fill="#fff"/>
      ${v.map((x) => svg`<path d="M${x} 51V178" stroke="#dfe3ef" stroke-width=".6"/>`)}
      ${h.map((y) => svg`<path d="M15 ${y}H171" stroke="#dfe3ef" stroke-width=".6"/>`)}
      ${bar(15, 11, 4, "#f03020")}${bar(20, 11, 14)}${bar(40, 10, 4, "#f05a5a", 4)}${bar(45, 11, 10)}${bar(66, 10, 3, "#3f9a6b", 4)}${bar(70, 11, 12)}
      ${bar(116, 10, 3, "#cf3d5c", 4)}${bar(120, 11, 29)}${bar(12, 18, 8)}${bar(25, 18, 3)}${bar(30, 18, 3)}${bar(35, 18, 3)}${bar(40, 18, 3)}${bar(142, 18, 5)}${bar(152, 18, 5)}${bar(163, 18, 5)}
      ${bar(27, 26, 4, "#8b8b8b", 3)}${bar(36, 26, 5, "#8b8b8b", 3)}${bar(45, 26, 3, "#418df8")}${bar(25, 32, 8)}${bar(35, 32, 6)}${bar(45, 32, 3, "#418df8")}${bar(54, 32, 3)}${bar(59, 32, 2)}${bar(65, 32, 2)}${bar(71, 32, 3)}${bar(77, 32, 4)}${bar(84, 32, 3, "#ff0", 3)}${bar(42, 26, 1)}${bar(54, 26, 5)}
      ${bar(139, 26, 9)}${bar(139, 32, 10)}${bar(157, 26, 7)}${bar(157, 32, 3)}${bar(23, 41, 3)}${bar(51, 41, 3)}${bar(57, 41, 2)}${bar(63, 41, 1)}
      ${bar(15, 52, 9, "#333", 1)}${bar(27, 52, 6, "#333", 1)}${bar(39, 52, 10, "#333", 1)}
      ${[56, 60, 64, 68, 72].map((y) => svg`${bar(15, y, 2, "#333", 1)}${bar(33, y, 5, "#333", 1)}${bar(47, y, 2, "#333", 1)}`)}
      <rect x="38" y="70" width="12" height="4" fill="none" stroke="#42b288"/>
      <rect x="38" y="47" width="12" height="3" fill="#2f6a52"/>
      <rect x="87" y="13" width="52" height="53" rx="2" fill="#4b4b4d"/><rect x="88" y="38" width="50" height="5" fill="#1a5fd0"/>
      ${[15, 20, 27, 34, 40, 47, 52, 57, 62].map((y, i) => bar(94, y, [5, 22, 11, 16, 5, 11, 23, 5, 11][i], "#d8d8d8"))}
      ${bar(129, 15, 8, "#c8c8c8")}${bar(116, 62, 5, "#d8d8d8")}${bar(129, 62, 5, "#d8d8d8")}
      <rect x="28" y="177" width="13" height="5" fill="#fff"/>${bar(31, 179, 7, "#42b288", 1)}
      ${bar(11, 180, 2)}${bar(16, 180, 2)}${bar(21, 180, 2)}${bar(25, 180, 2)}${bar(43, 180, 2)}${bar(11, 184, 3, "#57bb38", 3)}${bar(15, 185, 13)}${bar(34, 185, 1)}
    </svg>`;
  }
}

@customElement("app-root")
export class AppRoot extends LitElement {
  private rows = [["Product", "Price", "Quantity"], ["A", 25.5, 10], ["B", 30.2, 8], ["C", 15.8, 4], ["A", 22, 6], ["B", 18.5, 2]];
  static styles = [base, css`
    :host { position: relative; display: flex; flex-direction: column; height: 100vh; overflow: hidden; background: linear-gradient(#1a1b1e 300px, #181818 370px);
      font-family: Inter, "Noto Sans CJK SC", sans-serif; font-size: 26px; line-height: 1.3; }
    cell-grid { flex: 1; }
    .dialog { position: absolute; left: 1052px; top: 356px; }
    .preview { position: absolute; right: 0; bottom: 134px; }
    .mark { position: absolute; right: 4px; bottom: 12px; font: 55px/80px "Noto Sans CJK SC", sans-serif; color: rgba(205, 205, 205, 0.88);
      text-shadow: 1px 1px 1px rgba(0, 0, 0, 0.6); white-space: nowrap; pointer-events: none; }
  `];
  render() {
    return html`
      <title-tabs></title-tabs>
      <menu-bar></menu-bar>
      <tool-ribbon></tool-ribbon>
      <formula-bar></formula-bar>
      <cell-grid .rows=${this.rows}></cell-grid>
      <sheet-bar></sheet-bar>
      <status-bar></status-bar>
      <file-properties class="dialog" role="dialog" aria-label="表格.xlsx 属性"></file-properties>
      <screen-preview class="preview"></screen-preview>
      <div class="mark">CSDN @地piu菜</div>`;
  }
}
